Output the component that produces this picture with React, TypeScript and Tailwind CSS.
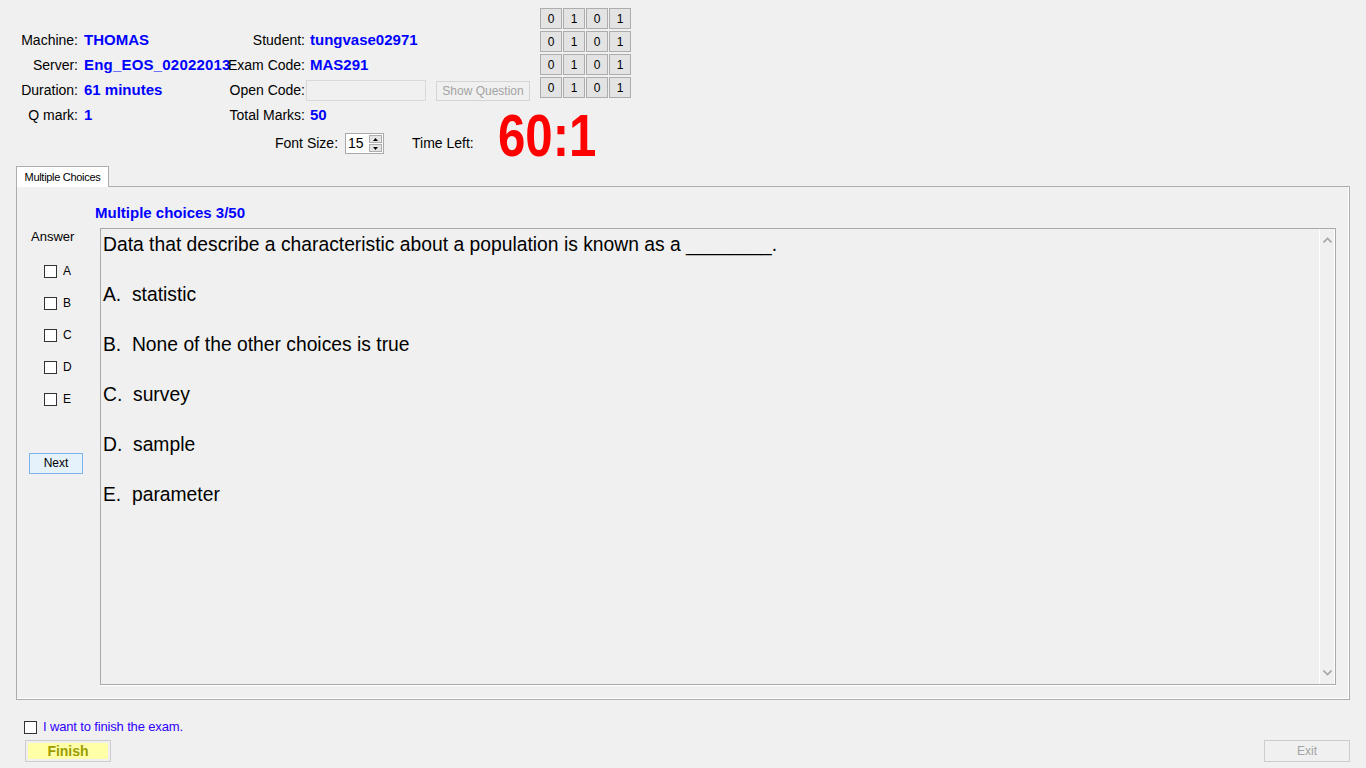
import React from 'react';

const FONT = { fontFamily: '"Liberation Sans", Arial, sans-serif' };

const Box: React.FC = () => (
  <span className="inline-block w-[13px] h-[13px] border border-[#333333] bg-white shrink-0" />
);

const Label: React.FC<{ text: string }> = ({ text }) => (
  <div className="h-[25px] flex items-center justify-end text-[14px] text-black whitespace-nowrap">{text}</div>
);

const Value: React.FC<{ text: string; className?: string }> = ({ text, className = '' }) => (
  <div className={`h-[25px] flex items-center text-[15px] font-bold text-[#0000ff] whitespace-nowrap overflow-hidden ${className}`}>
    {text}
  </div>
);

const options = ['A.  statistic', 'B.  None of the other choices is true', 'C.  survey', 'D.  sample', 'E.  parameter'];

const App: React.FC = () => {
  const bits = ['0', '1', '0', '1'];

  return (
    <div className="w-[1366px] h-[768px] bg-[#f0f0f0] overflow-hidden select-none" style={FONT}>
      {/* header */}
      <div className="flex">
        <div className="w-[540px] shrink-0">
          <div className="pt-[28px] grid grid-cols-[78px_152px_75px_235px]">
            <Label text="Machine:" />
            <Value text="THOMAS" className="pl-[6px]" />
            <Label text="Student:" />
            <Value text="tungvase02971" className="pl-[5px]" />

            <Label text="Server:" />
            <Value text="Eng_EOS_02022013" className="pl-[6px] tracking-[0.2px]" />
            <Label text="Exam Code:" />
            <Value text="MAS291" className="pl-[5px]" />

            <Label text="Duration:" />
            <Value text="61 minutes" className="pl-[6px]" />
            <Label text="Open Code:" />
            <div className="h-[25px] flex items-center pl-[1px]">
              <div className="w-[120px] h-[21px] border border-[#d9d9d9] bg-[#f0f0f0] shrink-0" />
              <button className="ml-[10px] w-[94px] h-[20px] border border-[#d4d4d4] bg-[#f0f0f0] text-[12px] text-[#a3a3a3] shrink-0 whitespace-nowrap">
                Show Question
              </button>
            </div>

            <Label text="Q mark:" />
            <Value text="1" className="pl-[6px]" />
            <Label text="Total Marks:" />
            <Value text="50" className="pl-[5px]" />
          </div>

          <div className="mt-[5px] h-[21px] flex items-center pl-[275px] text-[14px] text-black whitespace-nowrap">
            <span className="shrink-0">Font Size:</span>
            <div className="ml-[7px] w-[39px] h-[21px] shrink-0 border border-[#a9a9a9] bg-white flex items-center">
              <span className="pl-[2px] text-[14px] flex-1">15</span>
              <div className="w-[15px] h-full flex flex-col gap-[1px] p-[1px]">
                <div className="flex-1 border border-[#adadad] bg-[#e5e5e5] flex items-center justify-center">
                  <svg width="5" height="3" viewBox="0 0 5 3"><path d="M2.5 0L5 3H0z" fill="#000" /></svg>
                </div>
                <div className="flex-1 border border-[#adadad] bg-[#e5e5e5] flex items-center justify-center">
                  <svg width="5" height="3" viewBox="0 0 5 3"><path d="M0 0H5L2.5 3z" fill="#000" /></svg>
                </div>
              </div>
            </div>
            <span className="ml-[28px] shrink-0">Time Left:</span>
            <span className="ml-[24px] mb-[15px] shrink-0 origin-left scale-x-[0.82] text-[60px] leading-none font-bold text-[#ff0000]">
              60:1
            </span>
          </div>
        </div>

        <div className="mt-[8px] grid grid-cols-4 gap-x-[1px] gap-y-[2px] self-start">
          {[0, 1, 2, 3].map(r =>
            bits.map((b, i) => (
              <div
                key={`${r}-${i}`}
                className="w-[22px] h-[21px] border border-[#adadad] bg-[#e3e3e3] flex items-center justify-center text-[12px] text-black"
              >
                {b}
              </div>
            ))
          )}
        </div>
      </div>

      {/* tab control */}
      <div className="mt-[12px] px-[16px]">
        <div className="relative z-10 -mb-px w-[93px] h-[21px] border border-b-0 border-[#adadad] bg-white flex items-center justify-center text-[11px] tracking-[-0.3px] text-black">
          Multiple Choices
        </div>
        <div className="h-[514px] border border-[#adadad] flex shadow-[inset_-1px_-1px_0_#ffffff]">
          <div className="w-[83px] shrink-0 flex flex-col">
            <div className="mt-[42px] pl-[14px] h-[16px] flex items-center text-[13px] text-black">Answer</div>
            <div className="mt-[10px] pl-[27px]">
              {['A', 'B', 'C', 'D', 'E'].map(l => (
                <div key={l} className="h-[32px] flex items-center">
                  <Box />
                  <span className="ml-[6px] text-[12px] text-black">{l}</span>
                </div>
              ))}
            </div>
            <div className="mt-[35px] pl-[12px]">
              <button className="w-[54px] h-[21px] border border-[#7eb4ea] bg-[#e5f1fb] text-[12px] text-black">
                Next
              </button>
            </div>
          </div>

          <div className="flex-1 flex flex-col pr-[13px]">
            <div className="mt-[17px] -ml-[5px] h-[18px] flex items-center text-[15px] font-bold text-[#0000ff]">
              Multiple choices 3/50
            </div>
            <div className="mt-[6px] h-[457px] border border-[#a9a9a9] flex shadow-[0_1px_0_#ffffff]">
              <div className="flex-1 pt-[3px] pl-[2px] text-[19.3px] leading-[25px] text-black">
                <div className="h-[50px] whitespace-pre">Data that describe a characteristic about a population is known as a ________.</div>
                {options.map(o => (
                  <div key={o} className="h-[50px] whitespace-pre">{o}</div>
                ))}
              </div>
              <div className="w-[16px] border-l border-r border-white flex flex-col justify-between items-center py-[8px]">
                <svg width="9" height="6" viewBox="0 0 9 6">
                  <path d="M0.5 5.5L4.5 1.5L8.5 5.5" stroke="#a6a6a6" strokeWidth="1.6" fill="none" />
                </svg>
                <svg width="9" height="6" viewBox="0 0 9 6">
                  <path d="M0.5 0.5L4.5 4.5L8.5 0.5" stroke="#a6a6a6" strokeWidth="1.6" fill="none" />
                </svg>
              </div>
            </div>
          </div>
        </div>
      </div>

      {/* footer */}
      <div className="mt-[19px] pl-[24px] h-[16px] flex items-center">
        <Box />
        <span className="ml-[6px] text-[13px] tracking-[-0.15px] text-[#2f00ff]">I want to finish the exam.</span>
      </div>
      <div className="mt-[5px] flex justify-between pl-[25px] pr-[16px]">
        <button className="w-[86px] h-[22px] border border-[#cccccc] bg-[#f0f0f0] p-[2px]">
          <div className="w-full h-full bg-[#ffffa8] flex items-center justify-center text-[14px] font-bold text-[#9c9c00]">
            Finish
          </div>
        </button>
        <button className="w-[86px] h-[22px] border border-[#cccccc] bg-[#f0f0f0] text-[12px] text-[#a3a3a3]">
          Exit
        </button>
      </div>
    </div>
  );
};

export default App;
